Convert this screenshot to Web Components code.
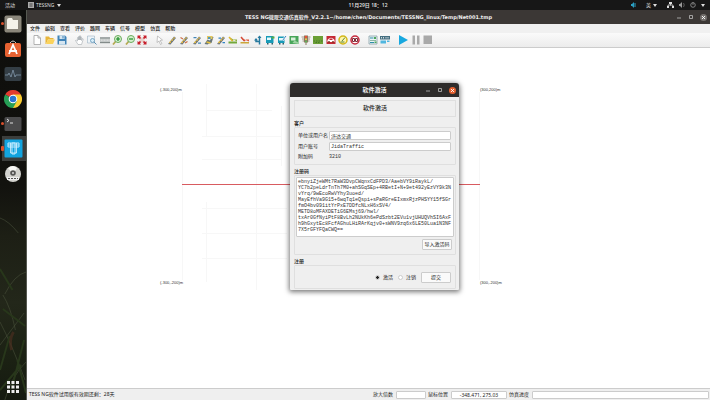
<!DOCTYPE html>
<html lang="zh-CN">
<head>
<meta charset="utf-8">
<title>TESS NG</title>
<style>
html,body{margin:0;height:100%}
body{font:5px/7px "Noto Sans","Noto Sans CJK SC",sans-serif;color:#222;overflow:hidden;background:#11110e}
</style>
</head>
<body>
<tess-desktop></tess-desktop>
<script>
const define=(name,html,setup)=>customElements.define(name,class extends HTMLElement{
  connectedCallback(){
    if(this.shadowRoot)return;
    const t=document.createElement('template');
    t.innerHTML='<style>*{box-sizing:border-box}button{font:inherit;color:inherit;border:0;background:none;padding:0;margin:0}svg{display:block}</style>'+html;
    this.attachShadow({mode:'open'}).appendChild(t.content.cloneNode(true));
    if(setup)setup(this,this.shadowRoot);
  }
});

/* toolbar glyphs, each on a 20 x 20 grid */
const road='<path d="M2 18L14 3l4 3L7 19z" fill="#6b747c"/><path d="M5 16L15 5" stroke="#f5c83c" stroke-width="2.5" stroke-dasharray="4 2"/>';
const glyphs={
 new:['新建','<path d="M4 1h8l5 5v13H4z" fill="#fff" stroke="#9c9c9c" stroke-width="1.5"/><path d="M12 1v5h5" fill="none" stroke="#9c9c9c" stroke-width="1.5"/>'],
 open:['打开','<path d="M1 3h7l2 3h7v3H6L2 18H1z" fill="#e8b53a"/><path d="M6 9h14l-4 9H2z" fill="#fbd35c"/>'],
 save:['保存','<path d="M1 1h15l3 3v15H1z" fill="#3f83b8"/><path d="M5 1h10v7H5zM4 12h12v7H4z" fill="#d5e5f0"/><path d="M11 2h2v5h-2z" fill="#3f83b8"/>'],
 hand:['平移','<path d="M6 19L1 11q1-2 4 1V5q1-2 2 0v5V3q1-2 2 0v7V2q1-2 2 0v8V4q2-1 2 0v7l2-4q2 0 1 3l-3 9z" fill="#fff" stroke="#9ba1a7" stroke-width="1.1"/>'],
 area:['框选','<path d="M1 2h14v14H1z" fill="#eef4f8" stroke="#8da7b8"/><circle cx="11" cy="11" r="4" fill="#d8edf8" stroke="#5e92b5" stroke-width="1.5"/><path d="M14 14l5 5" stroke="#5e92b5" stroke-width="2"/>'],
 ruler:['测距','<path d="M0 4h20v13H0z" fill="#c3c8c7"/><path d="M0 6h20M0 15h20" stroke="#838b8a" stroke-width="2"/><path d="M3 9v3M6 9v3M9 9v3M12 9v3M15 9v3M18 9v3" stroke="#eee"/>'],
 zoomin:['放大','<path d="M8 12l-6 7" stroke="#b5a951" stroke-width="3.5"/><circle cx="12" cy="8" r="7" fill="#d7efcf" stroke="#6aac5d" stroke-width="2"/><path d="M8 8h8M12 4v8" stroke="#168a25" stroke-width="2.4"/>'],
 zoomout:['缩小','<path d="M8 12l-6 7" stroke="#b5a951" stroke-width="3.5"/><circle cx="12" cy="8" r="7" fill="#d7efcf" stroke="#6aac5d" stroke-width="2"/><path d="M8 8h8" stroke="#168a25" stroke-width="2.4"/>'],
 fit:['全图','<path d="M5 5h10v10H5z" fill="#e9cfc9"/><path d="M1 8V1h7L6 3l2 3-2 2-3-2zM19 8V1h-7l2 2-2 3 2 2 3-2zM1 12v7h7l-2-2 2-3-2-2-3 2zM19 12v7h-7l2-2-2-3 2-2 3 2z" fill="#c8202c"/>'],
 pick:['选择','<path d="M5 2l10 8-5 1 4 6-3 2-3-7-4 3z" fill="#fff" stroke="#999" stroke-width="1.1"/>'],
 link:['路段',road],
 link2:['连接段',road+'<path d="M3 5l5 3M12 16l5-3" stroke="#ce6f45" stroke-width="2.5"/>'],
 link3:['车道',road+'<path d="M3 5h6M12 16h6" stroke="#4486b6" stroke-width="2.5"/>'],
 link4:['路口','<path d="M1 18L7 9l5 2 3-8 4 1-4 12-5 1-3 2z" fill="#6a7779"/><path d="M6 2h11v6H6z" fill="#e6c75d"/><path d="M8 4h5v4H8z" fill="#4f99b9"/><path d="M5 14l8 2" stroke="#e6c140" stroke-width="3"/>'],
 link5:['车道连接',road+'<path d="M5 6h5M13 15h5" stroke="#3084c4" stroke-width="2.5"/>'],
 car:['车辆组成','<path d="M1 13h17v4H1z" fill="#72a83b"/><path d="M2 4l7 9 3-4h6v4" fill="#8eae3d"/><path d="M2 4l7 8" stroke="#e1b72d" stroke-width="3"/>'],
 car2:['发车点','<path d="M1 14h17v3H1z" fill="#cba63b"/><path d="M2 6l7 7 3-4h6v4" fill="#df5a3d"/><path d="M2 4l7 8" stroke="#d64c38" stroke-width="3"/>'],
 route:['路径','<path d="M13 3v16M12 13H6V9" fill="none" stroke="#26799e" stroke-width="3"/><path d="M2 11l4-5 4 5M9 6l4-5 4 5" fill="#26799e"/>'],
 bus:['公交线路','<path d="M2 2h15v14H2z" fill="#189bb8"/><path d="M4 5h8v5H4z" fill="#e6f8fb"/><path d="M13 3h6v4h-6z" fill="#55ac48"/><path d="M4 16h3v3H4zM13 16h3v3h-3z" fill="#315d67"/>'],
 bus2:['公交站','<path d="M2 3h13v13H2z" fill="#189bb8"/><path d="M4 6h8v5H4z" fill="#e6f8fb"/><path d="M11 11l7-9" stroke="#fff" stroke-width="4"/><path d="M11 11l7-9" stroke="#3280c1" stroke-width="2"/><path d="M4 16h3v3H4zM11 16h3v3h-3z" fill="#315d67"/>'],
 map:['检测器','<path d="M1 2h18v16H1z" fill="#48a559"/><path d="M4 5h9v6H4z" fill="#d8efdb"/><path d="M7 16l4-5 8 4v3z" fill="#9dd2a2"/>'],
 signal:['信号灯','<path d="M6 1h8v14H6zM9 15h2v5H9z" fill="#8b7a60"/><path d="M1 4h18M2 8h16M3 12h14" stroke="#8b7a60" stroke-width="1.5"/><circle cx="10" cy="4" r="2.3" fill="#ef5036"/><circle cx="10" cy="8.5" r="2" fill="#eed14c"/><circle cx="10" cy="13" r="2" fill="#57b757"/>'],
 zone:['减速区','<path d="M0 2h20v16H0z" fill="#6b9f36"/><path d="M1 12h18M5 15h10" stroke="#4a7a29" stroke-width="2" stroke-dasharray="3 2"/>'],
 accident:['事故区','<path d="M1 2h18v16H1z" fill="#c52935"/><path d="M3 10q7-9 14 0v4H3z" fill="#fff"/><path d="M7 7h6v3H7z" fill="#c52935"/><circle cx="6" cy="14" r="2" fill="#832"/><circle cx="14" cy="14" r="2" fill="#832"/>'],
 gauge:['限速','<circle cx="10" cy="10" r="8" fill="#fff5a8" stroke="#d3b719" stroke-width="3"/><path d="M8 12l6-7M5 14h8" stroke="#558344" stroke-width="2"/>'],
 limit:['禁行','<circle cx="10" cy="10" r="8" fill="#fff" stroke="#c52a3d" stroke-width="3"/><path d="M5 7h4v6H5zM11 7h4v6h-4z" fill="none" stroke="#7d2934" stroke-width="2"/>'],
 table:['参数','<path d="M2 2h16v16H2z" fill="#eaf4f6" stroke="#829ba3" stroke-width="1.5"/><path d="M4 6h7M4 15h8" stroke="#2c8fa8" stroke-width="2"/><path d="M4 11h12" stroke="#8fb7a5" stroke-width="2"/><path d="M12 4h4v4h-4zM13 13h4v3h-4z" fill="#51a65b"/>'],
 time:['仿真时间','<path d="M0 2h20v7H0z" fill="#456f80"/><path d="M3 4v3M7 4v3M12 4v3M16 4v3" stroke="#fff" stroke-width="1.5"/><path d="M1 11h11v6H1z" fill="#50b6df"/><path d="M14 11h5v3h-5z" fill="#50b6df"/>'],
 play:['运行','<path d="M2 0l18 10L2 20z" fill="#18a8df"/>'],
 pause:['暂停','<path d="M3 1h5v18H3zM12 1h5v18h-5z" fill="#a9a9a9"/>'],
 stop:['停止','<path d="M1 1h17v17H1z" fill="#a9a9a9"/>']
};

define('tess-topbar',`<style>
:host{display:flex;height:10px;align-items:center;background:#171717;color:#ddd;padding:0 5px;flex:none}
.l,.r{display:flex;align-items:center;flex:1}
.l{gap:13px}.l button{display:flex;align-items:center;gap:2px}.c{font-weight:600;padding-left:26px}
.r{justify-content:flex-end;gap:10px}.r button{display:flex;align-items:center;gap:5px}
.r .im{gap:2px}
</style>
<div class="l"><button>活动</button><button><svg width="6" height="6" viewBox="0 0 6 6"><path d="M0 0h6v6H0z" fill="#aaa"/><path d="M1 2h4M1 4h4M3 1v4" stroke="#555" stroke-width=".7"/></svg><span>TESSNG</span><svg width="4" height="3"><path d="M0 0h4L2 3z" fill="#ddd"/></svg></button></div>
<time class="c">11月29日 18：12</time>
<div class="r">
<button aria-label="输入状态"><svg width="5" height="6" viewBox="0 0 5 6"><path d="M0 2h1l2-2v6L1 4H0z" fill="#2b9fc2"/><path d="M4 1v4" stroke="#2b9fc2"/></svg></button>
<button class="im">英<svg width="4" height="3"><path d="M0 0h4L2 3z" fill="#ddd"/></svg></button>
<button aria-label="系统菜单"><svg width="7" height="6" viewBox="0 0 7 6"><path d="M2 0h3v2H2zM0 4h2v2H0zM5 4h2v2H5z" fill="#ddd"/><path d="M3.5 2v1.5M1 4V3h5v1" fill="none" stroke="#ddd" stroke-width=".8"/></svg><svg width="6" height="6"><path d="M0 2h1l2-2v6L1 4H0z" fill="#999"/><path d="M4.5 1q1.5 2 0 4" fill="none" stroke="#777" stroke-width=".7"/></svg><svg width="6" height="6"><circle cx="3" cy="3" r="2.3" fill="none" stroke="#999" stroke-width=".8"/><path d="M3 0v3" stroke="#999" stroke-width=".7"/></svg><svg width="4" height="3"><path d="M0 0h4L2 3z" fill="#ddd"/></svg></button>
</div>`);

define('tess-dock',`<style>
:host{display:flex;flex-direction:column;width:27px;flex:none;position:relative;padding:1px 0 4px;background:linear-gradient(#0e0e0c,#12120e 45%,#1d1f15 58%,#23271a 75%,#1b2113 90%,#151a10);border-right:1px solid #555850}
.bg{position:absolute;inset:0;width:100%;height:100%}
button{height:25px;display:flex;align-items:center;justify-content:center;position:relative}
button.on{background:#3c3e3c;margin-left:2px;padding-right:2px}
button.run::before{content:"";position:absolute;left:1px;width:3px;height:3px;border-radius:50%;background:#d9502c}
button.on::before{left:-1px;height:5px;border-radius:1px}
.grid{margin-top:auto;height:18px}
</style>
<svg class="bg" viewBox="0 0 27 390" preserveAspectRatio="none" fill="none"><g stroke="#48503a" opacity=".6"><path d="M0 208q9 3 19 15M3 285q8 12 13 35M27 262q-12 3-22 22M0 312q12 22 26 58M5 390q7-24 22-38M0 335l25-32"/></g><g stroke="#28371b" stroke-width="2"><path d="M0 360l10-34M25 330L12 379M3 299l23 17M0 259l13 21M18 350l9 33M0 380l22-25"/></g><path d="M14 322q-5 8-2 18" stroke="#482d20" stroke-width="3" opacity=".7"/></svg>
<button class="run" aria-label="文件"><svg width="18" height="18"><rect x=".5" y=".5" width="17" height="17" rx="2" fill="#8b877b"/><path d="M3 5q0-2 2-2h3l1 2h5v9H3z" fill="#f4f2e9"/></svg></button>
<button aria-label="软件"><svg width="18" height="18" viewBox="0 0 18 18"><path d="M6 3q3-4 6 0" fill="none" stroke="#ccc"/><rect x="1" y="3" width="16" height="14" rx="2" fill="#e76232"/><path d="M5 14l4-9 4 9M5 11h8" fill="none" stroke="#fff" stroke-width="1.8"/></svg></button>
<button aria-label="系统监视器"><svg width="18" height="18"><rect x=".5" y="2" width="17" height="14" rx="2" fill="#343e45"/><path d="M1 10h3l1-2 2 4 2-7 2 7 1-2h5" fill="none" stroke="#8297aa" stroke-width=".8"/></svg></button>
<button aria-label="浏览器"><svg width="18" height="18" viewBox="0 0 18 18"><path d="M9 9L1.2 4.5A9 9 0 0116.8 4.5z" fill="#e13b30"/><path d="M9 9V4.5h7.8A9 9 0 019 18z" fill="#f8cb31"/><path d="M9 9l4 2-4 7A9 9 0 011.2 4.5z" fill="#269f56"/><circle cx="9" cy="9" r="4.3" fill="#fff"/><circle cx="9" cy="9" r="3.3" fill="#2876d2"/></svg></button>
<button class="run" aria-label="终端"><svg width="18" height="18"><rect x=".5" y="2" width="17" height="14" rx="1.5" fill="#4b4b4c"/><path d="M3 4l2 1.5L3 7M6 8h3" fill="none" stroke="#eee" stroke-width=".9"/></svg></button>
<button class="run on" aria-label="TESSNG"><svg width="19" height="19"><rect x=".5" y=".5" width="18" height="18" rx="1" fill="#12a4df"/><path d="M4 4h11v4H4zM8 4h3v11H8z" fill="none" stroke="#bfeaff"/><path d="M4 6h11M6.5 4v10h6V4" fill="none" stroke="#d9f4ff" stroke-width=".8"/></svg></button>
<button aria-label="光盘"><svg width="18" height="18"><circle cx="9" cy="9" r="8" fill="#d2d2ce"/><path d="M9 9L4 3q5-4 9 0z" fill="#f8f8f5"/><circle cx="9" cy="8" r="2.8" fill="#555"/><circle cx="9" cy="8" r="1" fill="#ddd"/><path d="M3 12h12v3H3z" fill="#eee"/><path d="M4 13.5h10" stroke="#555" stroke-dasharray="2 1"/></svg></button>
<button class="grid" aria-label="显示应用程序"><svg width="12" height="12" fill="#eee"><path d="M0 0h3v3H0zM4.5 0h3v3h-3zM9 0h3v3H9zM0 4.5h3v3H0zM4.5 4.5h3v3h-3zM9 4.5h3v3H9zM0 9h3v3H0zM4.5 9h3v3h-3zM9 9h3v3H9z"/></svg></button>`);

define('tess-titlebar',`<style>
:host{display:grid;grid-template-columns:1fr auto 1fr;align-items:center;height:14px;background:#3b3735;color:#eee;flex:none;font-family:"DejaVu Sans","Noto Sans CJK SC",sans-serif;font-weight:700;padding:0 3px}
h1{grid-column:2;font:inherit;margin:0;white-space:nowrap}
div{display:flex;justify-content:flex-end;align-items:center;gap:6px}
.x{width:7px;height:7px;border-radius:50%;background:var(--close,#74706d)}
</style><h1><slot></slot></h1><div>
<button aria-label="最小化"><svg width="6" height="6"><path d="M1 4h4" stroke="#bbb" stroke-width=".8"/></svg></button>
<button aria-label="最大化"><svg width="6" height="6"><path d="M1.5 1.5h3v3h-3z" fill="none" stroke="#bbb" stroke-width=".8"/></svg></button>
<button class="x" aria-label="关闭"><svg width="7" height="7"><path d="M2 2l3 3M5 2L2 5" stroke="#fff" stroke-width=".9"/></svg></button></div>`);

define('tess-menubar',`<style>:host{display:flex;gap:5px;height:9px;align-items:center;padding:0 3px;background:#f0f0f0;color:#222;flex:none;font-weight:500}</style>`,
(h,r)=>'文件 编辑 查看 评价 路网 车辆 信号 模型 仿真 帮助'.split(' ').forEach(x=>{const b=document.createElement('button');b.textContent=x;r.append(b)}));

define('tess-toolbar',`<style>
:host{display:flex;gap:8px;height:15px;align-items:center;padding:0 5px;background:linear-gradient(#fafafa,#ececec);border-bottom:1px solid #ccc;flex:none}
div{display:flex;justify-content:space-between}
</style>`,(h,r)=>[
 [35,'new open save'],[72,'hand area ruler zoomin zoomout fit'],
 [205,'pick link link2 link3 link4 link5 car car2 route bus bus2 map signal zone accident gauge limit'],
 [22,'table time'],[35,'play pause stop']].forEach(([w,names])=>{
  const g=document.createElement('div');g.style.width=w+'px';
  g.innerHTML=names.split(' ').map(n=>`<button aria-label="${glyphs[n][0]}"><svg width="10" height="10" viewBox="0 0 20 20">${glyphs[n][1]}</svg></button>`).join('');
  r.append(g)}));

define('tess-scene',`<style>
:host{display:block;flex:1;min-height:0;position:relative;background:#fff;overflow:hidden;font:4px/5px "Liberation Sans",sans-serif;color:#333}
svg,span{position:absolute}
svg{left:155px;top:36px}
.n{top:39px}.s{top:232px}.w{left:133px}.e{left:453px}
</style>
<svg width="298" height="206" fill="none"><path d="M.5 8v188M24.5 0v52M24.5 118v80M74.5 0v206M99.5 22v60M297.5 8v188M24 26.5h66M20 52.5h80M20 75.5h80M20 124.5h85M20 149.5h85M20 174.5h85" stroke="#f7f7f7"/><path d="M0 100.5h298" stroke="#d85b60"/></svg>
<span class="n w">(-300,200)m</span><span class="n e">(300,200)m</span><span class="s w">(-300,-200)m</span><span class="s e">(300,-200)m</span>`);

define('tess-statusbar',`<style>
:host{display:flex;height:12px;align-items:center;gap:2px;background:#efefef;border-top:1px solid #ccc;padding:0 1px 0 2px;flex:none}
p{margin:0;flex:1;white-space:nowrap}
label{display:flex;align-items:center;gap:3px;white-space:nowrap}
input{font:inherit;color:inherit;height:8px;border:1px solid #ccc;border-radius:1px;background:#fff;padding:0;margin:0;text-align:center}
.a{width:30px}.b{width:56px}.c{width:177px}
</style><p>TESS NG软件试用版有效期还剩：28天</p>
<label>放大倍数<input class="a"></label><label>鼠标位置<input class="b" value="-348.471, 275.03"></label><label>仿真进度<input class="c" readonly></label>`);

define('tess-group',`<style>
:host{display:block}
fieldset{border:0;margin:0;padding:0;min-width:0}
legend{padding:0;font-weight:500;line-height:7px}
div{border:1px solid #dfdfdf;border-radius:1px;padding:3px}
</style><fieldset><legend></legend><div><slot></slot></div></fieldset>`,(h,r)=>r.querySelector('legend').textContent=h.getAttribute('label'));

define('tess-dialog',`<style>
:host{display:block;width:169px;background:#efefef;border-radius:4px 4px 1px 1px;box-shadow:0 1px 5px 1px #0008;color:#222;--close:#e4602f}
tess-titlebar{background:#2e2c2b;border-radius:3px 3px 0 0}
tess-titlebar span,h2{font-size:6px}
main{padding:3px 3px 1px 4px;display:flex;flex-direction:column;gap:3px}
h2{margin:0;height:17px;border:1px solid #dfdfdf;display:flex;align-items:center;justify-content:center;font-weight:500}
.f{display:grid;grid-template-columns:31px 1fr;row-gap:2px;align-items:center;white-space:nowrap;padding:0 1px 1px 0}
input,textarea,.send{border:1px solid #ccc;border-radius:1px;background:#fff}
input,textarea,output{font:5px/6px "Liberation Mono","Noto Sans CJK SC",monospace;color:#333}
.f input{height:9px;width:100%;padding:0 1px;margin:0}
textarea{display:block;width:100%;height:60px;padding:1px 0 0 1px;margin:0;resize:none;white-space:pre;overflow:hidden}
.code{margin:-3px -2px;padding:1px 0 4px}
.send{width:30px;height:11px;background:#fafafa}
.right{display:flex;justify-content:flex-end;align-items:center}
.code .right{margin-top:2px;padding-right:2px}
.reg{height:16px;gap:5px;padding-right:1px}
.reg label{display:flex;gap:3px;align-items:center}
[type=radio]{appearance:none;width:5px;height:5px;border-radius:50%;margin:0;padding:0}
[type=radio]:checked{background:radial-gradient(#222 0 1px,#fff 2px)}
</style>
<tess-titlebar><span>软件激活</span></tess-titlebar>
<main><h2>软件激活</h2>
<tess-group label="客户"><div class="f"><label for="u">单位或用户名</label><input id="u" value="济达交通"><label for="n">用户账号</label><input id="n" value="JidaTraffic"><label for="k">附加码</label><output id="k">3210</output></div></tess-group>
<tess-group label="注册码"><div class="code"><textarea aria-label="注册码" spellcheck="false">ebnyiZjeWMt7RaW3DvpCWqnxCdFPD3/AaebVY9iRaykL/
YC7b2peLdrTnTh7M0+ahSGqSEp+4RBetI+N+9et492yEzVY9k3N
vYrq/9wEcoRwVYhy3uoed/
MayEfhVa9G15+6wqTq1eQspi+sPaRGreEIxmxRjzPHSYY15fSGr
fmO4bv091itYrPxE7DDfcNLxH6xSV4/
METD8oMFAXDETiG6EMsj69/hwl/
txAr0GfNyiPtF8BvLh2NUkKh6ePdSzbt2EVu1vjUHUQVhSI6AxF
h9hGxytEc8FcfAGhuLHiRArKqjv0+sWNV9zq6x6LE50Lua1N3NF
7X5rGFYFQaCWQ==</textarea><div class="right"><button class="send">导入激活码</button></div></div></tess-group>
<tess-group label="注册"><div class="right reg"><label><input type="radio" name="m" checked>激活</label><label><input type="radio" name="m">注销</label><button class="send">提交</button></div></tess-group>
</main>`);

define('tess-desktop',`<style>
:host{display:flex;flex-direction:column;height:100vh}
.row{display:flex;flex:1;min-height:0}
section{display:flex;flex-direction:column;flex:1;min-width:0}
tess-dialog{position:absolute;left:290px;top:83px}
</style><tess-topbar></tess-topbar><div class="row"><tess-dock></tess-dock><section>
<tess-titlebar>TESS NG微观交通仿真软件_V2.2.1~/home/chen/Documents/TESSNG_linux/Temp/Net001.tmp</tess-titlebar>
<tess-menubar></tess-menubar><tess-toolbar></tess-toolbar><tess-scene></tess-scene><tess-statusbar></tess-statusbar></section></div>
<tess-dialog></tess-dialog>`);
</script>
</body>
</html>
